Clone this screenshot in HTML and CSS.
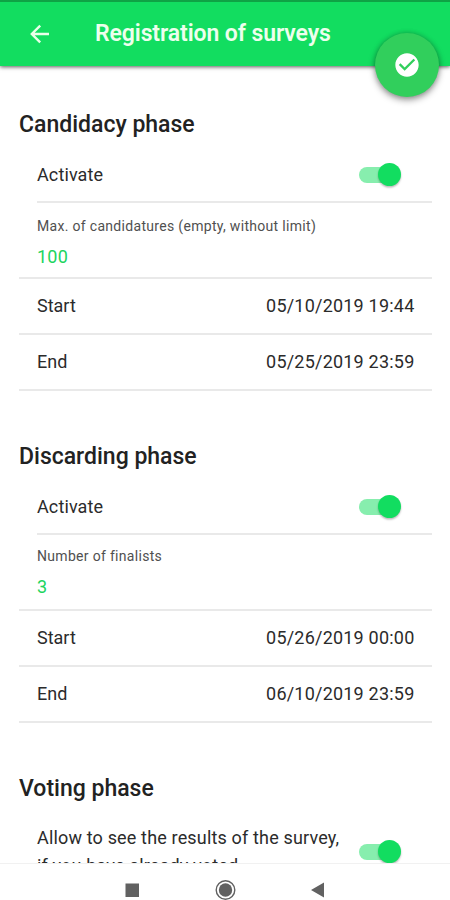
FILE: index.html
```html
<!DOCTYPE html>
<html lang="en">
<head>
<meta charset="utf-8">
<title>Registration of surveys</title>
<link rel="stylesheet" href="styles.css">
</head>
<body>
<div class="screen">
  <header class="bar">
    <svg class="back" width="20" height="20" viewBox="0 0 20 20"><path d="M10.2 1.6 1.8 10l8.400 8.400M2 10h17" fill="none" stroke="#e9ffe9" stroke-width="2.400"/></svg>
    <h1 class="title"><span>Registration of surveys</span></h1>
    <button class="fab" aria-label="Save"><svg width="28" height="28" viewBox="0 0 24 24"><path fill="#fff" d="M12 2C6.480 2 2 6.480 2 12s4.480 10 10 10 10-4.480 10-10S17.520 2 12 2zm-2 15-5-5 1.410-1.410L10 14.170l7.590-7.590L19 8l-9 9z"/></svg></button>
  </header>
  <main class="content">
    <section class="phase">
      <h2 class="heading">Candidacy phase</h2>
      <div class="row inset"><span class="label activate">Activate</span><i class="toggle"></i></div>
      <div class="field"><span class="caption limit">Max. of candidatures (empty, without limit)</span><span class="value">100</span></div>
      <div class="row"><span class="label">Start</span><span class="date">05/10/2019 19:44</span></div>
      <div class="row"><span class="label">End</span><span class="date">05/25/2019 23:59</span></div>
    </section>
    <section class="phase">
      <h2 class="heading">Discarding phase</h2>
      <div class="row inset"><span class="label activate">Activate</span><i class="toggle"></i></div>
      <div class="field high"><span class="caption">Number of finalists</span><span class="value">3</span></div>
      <div class="row"><span class="label">Start</span><span class="date">05/26/2019 00:00</span></div>
      <div class="row"><span class="label">End</span><span class="date">06/10/2019 23:59</span></div>
    </section>
    <section class="phase">
      <h2 class="heading">Voting phase</h2>
      <div class="row inset tall"><span class="label">Allow to see the results of the survey,<br>if you have already voted</span><i class="toggle"></i></div>
    </section>
  </main>
  <nav class="nav">
    <svg width="450" height="36" viewBox="0 0 450 36">
      <path d="M125.500 19.500h13.500v13.500h-13.500zM311 26l13-7.500v15z" fill="#616161"/>
      <circle cx="225.500" cy="26" r="9.300" fill="none" stroke="#616161" stroke-width="1.400"/>
      <circle cx="225.500" cy="26" r="6.700" fill="#616161"/>
    </svg>
  </nav>
</div>
</body>
</html>
```
FILE: styles.css
```css
* { box-sizing: border-box; }
body { margin: 0; background: #fff; font-family: Roboto, "Liberation Sans", sans-serif; color: #2b2b2b; }
.screen { height: 900px; display: flex; flex-direction: column; overflow: hidden; }
.bar { position: relative; z-index: 1; flex: none; height: 66px; border-top: 2px solid #0fa345; background: #12dd60; box-shadow: 0 1px 4px rgba(0,0,0,.65); display: flex; align-items: center; padding-left: 30px; }
.back { flex: none; }
.title { margin: 0 0 0 45px; font-size: 23px; line-height: 28px; letter-spacing: -.1px; font-weight: 600; color: #edffed; white-space: nowrap; }
.fab { position: absolute; right: 11px; top: 31px; width: 64px; height: 64px; padding: 0; border: 0; border-radius: 50%; background: #31cf5c; display: grid; place-items: center; box-shadow: 0 3px 7px rgba(0,0,0,.4), 0 0 5px rgba(0,0,0,.18); }
.content { flex: none; height: 804px; overflow: hidden; margin-top: -7px; padding: 0 18px 0 19px; }
.heading { margin: 0; height: 90px; padding-top: 51px; font-size: 23px; line-height: 30px; font-weight: 500; color: #222; white-space: nowrap; }
.row { height: 56px; display: flex; align-items: center; justify-content: space-between; padding: 0 18px; border-bottom: 2px solid #e9e9e9; font-size: 18px; line-height: 26px; white-space: nowrap; }
.row.inset { height: 54px; margin-left: 18px; padding: 0 31px 0 0; }
.row.tall { height: 80px; padding-top: 0; line-height: 28px; letter-spacing: .16px; }
.activate { letter-spacing: .12px; }
.date { letter-spacing: .21px; margin-right: -.5px; }
.toggle { position: relative; width: 42px; height: 24px; display: flex; align-items: center; }
.toggle::before { content: ""; width: 32px; height: 16px; border-radius: 8px; background: #87eeae; }
.toggle::after { content: ""; position: absolute; right: 0; top: 0; width: 23px; height: 23px; border-radius: 50%; background: #12dd60; box-shadow: 0 1.5px 2px rgba(0,0,0,.28); }
.field { height: 76px; padding: 13px 18px 0; border-bottom: 2px solid #e9e9e9; display: flex; flex-direction: column; }
.field.high { padding-top: 11px; }
.caption { font-size: 14px; line-height: 20px; letter-spacing: .31px; color: #505050; align-self: flex-start; white-space: nowrap; }
.value { margin-top: 10px; font-size: 18px; line-height: 22px; letter-spacing: .2px; color: #20d45e; }
.nav { flex: none; height: 37px; border-top: 1px solid #f1f1f1; background: #fff; }
.nav svg { display: block; }
```
